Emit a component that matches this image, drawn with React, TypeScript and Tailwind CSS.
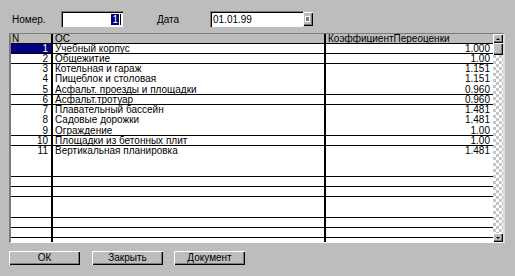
import React from 'react'

type Row = { n?: string; name?: string; k?: string; h: number; line?: boolean; sel?: boolean }

const DATA: { n: string; name: string; k: string }[] = [
  { n: '1', name: 'Учебный корпус', k: '1.000' },
  { n: '2', name: 'Общежитие', k: '1.00' },
  { n: '3', name: 'Котельная и гараж', k: '1.151' },
  { n: '4', name: 'Пищеблок и столовая', k: '1.151' },
  { n: '5', name: 'Асфальт. проезды и площадки', k: '0.960' },
  { n: '6', name: 'Асфальт.тротуар', k: '0.960' },
  { n: '7', name: 'Плавательный бассейн', k: '1.481' },
  { n: '8', name: 'Садовые дорожки', k: '1.481' },
  { n: '9', name: 'Ограждение', k: '1.00' },
  { n: '10', name: 'Площадки из бетонных плит', k: '1.00' },
  { n: '11', name: 'Вертикальная планировка', k: '1.481' },
]

// row heights follow the 10.2px pitch of the original grid
const HEIGHTS = [10, 10, 10, 11, 10, 10, 10, 11, 10, 10, 10, 10, 11, 10, 10, 10, 11, 10, 10, 4]
const LINED = [0, 1, 4, 5, 8, 9, 12, 13, 14, 16, 17, 18]

const rows: Row[] = HEIGHTS.map((h, i) => ({
  ...(DATA[i] ?? {}),
  h,
  line: LINED.includes(i),
  sel: i === 0,
}))

const raised = 'shadow-[inset_1px_1px_0_#ffffff,inset_-1px_-1px_0_#000000,inset_-2px_-2px_0_#7b7b7b]'
const sunken = 'shadow-[inset_1px_1px_0_#7b7b7b,inset_2px_2px_0_#000000]'

function Btn({ label, className }: { label: string; className?: string }) {
  return (
    <div className={`w-[71px] h-[14px] bg-[#bdbdbd] flex items-center justify-center text-[10px] leading-[10px] text-black ${raised} ${className ?? ''}`}>
      {label}
    </div>
  )
}

export default function App() {
  return (
    <div
      className="w-[515px] h-[276px] bg-[#bdbdbd] overflow-hidden text-black"
      style={{ fontFamily: '"Liberation Sans", Arial, sans-serif' }}
    >
      {/* Top fields */}
      <div className="h-[33px] flex items-start pt-[11px] pl-[12px]">
        <div className="w-[49px] h-[16px] flex items-center text-[10px]">Номер.</div>
        <div className={`w-[62px] h-[16px] bg-white flex items-center justify-end pr-[2px] ${sunken}`}>
          <span className="bg-[#000080] text-white text-[10px] leading-[11px] px-[1px]">1</span>
          <span className="w-[1px] h-[11px] bg-black ml-[1px]" />
        </div>
        <div className="ml-[34px] w-[53px] h-[16px] flex items-center text-[10px]">Дата</div>
        <div className={`w-[93px] h-[16px] bg-white flex items-center pl-[3px] text-[10px] ${sunken}`}>
          01.01.99
        </div>
        <div className={`w-[10px] h-[14px] mt-[1px] bg-[#bdbdbd] flex items-center justify-center ${raised}`}>
          <div className="w-[5px] h-[6px] border border-white bg-[#7b7b7b] mb-[1px] mr-[1px]" />
        </div>
      </div>

      {/* Grid */}
      <div className="ml-[9px] w-[496px] h-[210px] flex border-t border-l-2 border-[#7b7b7b] border-b border-b-white border-r-2 border-r-[#dedede]">
        <div className="w-[482px] flex flex-col overflow-hidden">
          <div className="h-[10px] flex border-b border-black text-[10px] leading-[9px]">
            <div className="w-[42px] border-r-2 border-black pl-[1px]">N</div>
            <div className="w-[273px] border-r-2 border-black pl-[2px]">ОС</div>
            <div className="w-[167px] pl-[2px]">КоэффициентПереоценки</div>
          </div>
          {rows.map((r, i) => (
            <div
              key={i}
              className={`flex shrink-0 bg-white text-[10px] leading-[10px] ${r.line ? 'border-b border-black' : ''}`}
              style={{ height: r.h }}
            >
              <div
                className={`w-[42px] border-r-2 border-black text-right pr-[3px] ${r.sel ? 'bg-[#000080] text-white' : ''}`}
              >
                {r.n}
              </div>
              <div className="w-[273px] border-r-2 border-black pl-[2px] whitespace-nowrap overflow-hidden">
                {r.name}
              </div>
              <div className="w-[167px] text-right pr-[3px]">{r.k}</div>
            </div>
          ))}
        </div>

        {/* Scrollbar */}
        <div className="w-[10px] flex flex-col">
          <div className={`h-[9px] bg-[#bdbdbd] flex items-center justify-center ${raised}`}>
            <div className="w-0 h-0 border-l-[2px] border-r-[2px] border-b-[2px] border-l-transparent border-r-transparent border-b-black" />
          </div>
          <div className={`h-[12px] bg-[#bdbdbd] ${raised}`} />
          <div className="flex-1 bg-[repeating-conic-gradient(#ffffff_0_25%,#c6c6c6_0_50%)] bg-[length:6px_6px]" />
          <div className={`h-[9px] bg-[#bdbdbd] flex items-center justify-center ${raised}`}>
            <div className="w-0 h-0 border-l-[2px] border-r-[2px] border-t-[2px] border-l-transparent border-r-transparent border-t-black" />
          </div>
        </div>
      </div>

      {/* Buttons */}
      <div className="flex pl-[9px] mt-[8px]">
        <Btn label="ОК" />
        <Btn label="Закрыть" className="ml-[12px]" />
        <Btn label="Документ" className="ml-[11px]" />
      </div>
    </div>
  )
}
